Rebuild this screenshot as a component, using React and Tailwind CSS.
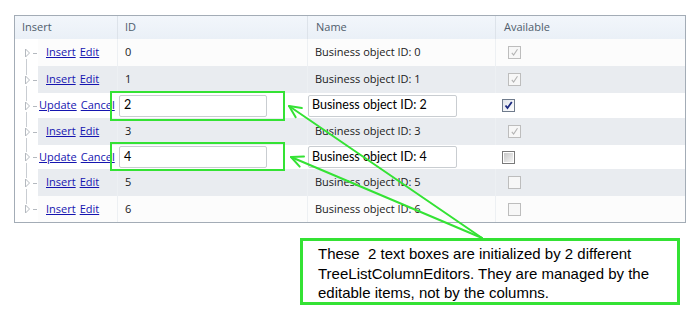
import React from 'react';

const rows = [
    { id: 0, h: 27, shade: false, edit: false, checked: true },
    { id: 1, h: 27, shade: true, edit: false, checked: true },
    { id: 2, h: 25, shade: false, edit: true, checked: true },
    { id: 3, h: 27, shade: true, edit: false, checked: true },
    { id: 4, h: 24, shade: false, edit: true, checked: false },
    { id: 5, h: 27, shade: true, edit: false, checked: false },
    { id: 6, h: 26, shade: false, edit: false, checked: false },
];

function TreeLines({ h, first, last }) {
    const c = Math.round(h / 2);
    return (
        <svg width="23" height={h} className="block">
            {!first && <line x1="11.5" y1="0" x2="11.5" y2={c - 5} stroke="#c9cdd2" strokeWidth="1" />}
            {!last && <line x1="11.5" y1={c + 6} x2="11.5" y2={h} stroke="#c9cdd2" strokeWidth="1" />}
            <path d={`M10.5 ${c - 4} L14.5 ${c} L10.5 ${c + 4} Z`} fill="none" stroke="#b4b9bf" strokeWidth="1" />
            <line x1="18" y1={c + 0.5} x2="22" y2={c + 0.5} stroke="#b4b9bf" strokeWidth="1" />
        </svg>
    );
}

function Check({ edit, checked }) {
    if (edit) {
        return checked ? (
            <div className="w-[13px] h-[13px] border border-[#6f7b8c] bg-gradient-to-br from-[#dfe3ea] to-[#ffffff] flex items-center justify-center">
                <svg width="9" height="9" viewBox="0 0 9 9"><path d="M1.5 4.5 L3.5 7 L7.8 1" fill="none" stroke="#1c2a80" strokeWidth="1.8" /></svg>
            </div>
        ) : (
            <div className="w-[13px] h-[13px] border border-[#7a7a7a] bg-white p-[1px]">
                <div className="w-full h-full bg-gradient-to-br from-[#c8c8c8] to-[#f4f4f4]"></div>
            </div>
        );
    }
    return (
        <div className="w-[13px] h-[13px] border border-[#bdbdbd] bg-[#f7f7f7] flex items-center justify-center">
            {checked && <svg width="9" height="9" viewBox="0 0 9 9"><path d="M1.8 4.8 L3.6 7 L7.5 1.2" fill="none" stroke="#b3b3b3" strokeWidth="1.1" /></svg>}
        </div>
    );
}

export default function App() {
    const green = '#34e234';
    const inputFont = { fontFamily: 'Lato, "Open Sans", sans-serif' };
    return (
        <div className="relative w-[699px] h-[316px] bg-white pt-[15px] pl-[14px] overflow-hidden" style={{ fontFamily: '"Open Sans", "Noto Sans", sans-serif' }}>
            {/* GRID */}
            <div className="w-[672px] border border-[#a3acb6] bg-[#fcfcfc]">
                <div className="flex h-[23px] items-center text-[11px] text-[#4f5d6c] bg-gradient-to-b from-[#f2f6fb] to-[#eaf0f7]">
                    <div className="w-[103px] h-full flex items-center pl-[7px] border-r border-[#dde3ea]">Insert</div>
                    <div className="w-[190px] h-full flex items-center pl-[7px] border-r border-[#dde3ea]">ID</div>
                    <div className="w-[188px] h-full flex items-center pl-[8px] border-r border-[#dde3ea]">Name</div>
                    <div className="flex-1 h-full flex items-center pl-[8px]">Available</div>
                </div>
                {rows.map((r, i) => (
                    <div key={r.id} className="flex text-[11px] text-[#1a1a1a]" style={{ height: r.h }}>
                        <div className="w-[23px] bg-white">
                            <TreeLines h={r.h} first={i === 0} last={i === rows.length - 1} />
                        </div>
                        <div className={`flex flex-1 ${r.shade ? 'bg-[#e9ecf0]' : r.edit ? 'bg-white' : 'bg-[#fcfcfc]'}`}>
                            {r.edit ? (
                                <>
                                    <div className="w-[80px] flex items-center pl-[1px] gap-[4px] text-[#1515b0] underline">
                                        <span>Update</span><span>Cancel</span>
                                    </div>
                                    <div className="w-[190px] flex items-center pl-[1px]">
                                        <div className="w-[148px] h-[22px] border border-[#c9cdd1] rounded-[2px] bg-white flex items-center pl-[4px] text-[12.5px] text-black" style={inputFont}>{r.id}</div>
                                    </div>
                                    <div className="w-[188px] flex items-center">
                                        <div className="w-[149px] h-[22px] border border-[#c9cdd1] rounded-[2px] bg-white flex items-center pl-[3px] text-[12.5px] text-black whitespace-nowrap" style={inputFont}>Business object ID: {r.id}</div>
                                    </div>
                                    <div className="flex-1 flex items-center pl-[6px]">
                                        <Check edit checked={r.checked} />
                                    </div>
                                </>
                            ) : (
                                <>
                                    <div className="w-[80px] flex items-center pl-[8px] gap-[4px] text-[#1515b0] underline border-r border-[#edf0f3]">
                                        <span>Insert</span><span>Edit</span>
                                    </div>
                                    <div className="w-[190px] flex items-center pl-[7px] border-r border-[#edf0f3]">{r.id}</div>
                                    <div className="w-[188px] flex items-center pl-[7px] border-r border-[#edf0f3]">Business object ID: {r.id}</div>
                                    <div className="flex-1 flex items-center pl-[12px]">
                                        <Check checked={r.checked} />
                                    </div>
                                </>
                            )}
                        </div>
                    </div>
                ))}
            </div>

            {/* CALLOUT */}
            <div className="ml-[286px] mt-[15px] w-[380px] h-[67px] border-[3px] border-[#34e234] bg-white pl-[15px] pt-[3px] text-[15px] leading-[19.5px] text-black whitespace-pre" style={{ fontFamily: '"Liberation Sans", Arial, sans-serif' }}>
                <div>These  2 text boxes are initialized by 2 different</div>
                <div>TreeListColumnEditors. They are managed by the</div>
                <div>editable items, not by the columns.</div>
            </div>

            {/* ANNOTATIONS */}
            <div className="absolute left-[110px] top-[91px] w-[175px] h-[30px] border-2 border-[#34e234]"></div>
            <div className="absolute left-[110px] top-[142px] w-[175px] h-[29px] border-2 border-[#34e234]"></div>
            <svg className="absolute left-0 top-0" width="699" height="316">
                <g fill="none" stroke={green} strokeWidth="2" strokeLinecap="round" strokeLinejoin="round">
                    <line x1="482" y1="238" x2="289" y2="106" />
                    <polyline points="295.7,117.2 289,106 301.8,108.1" />
                    <line x1="482" y1="238" x2="291" y2="157" />
                    <polyline points="299.7,166.6 291,157 304,156.5" />
                </g>
            </svg>
        </div>
    );
}
